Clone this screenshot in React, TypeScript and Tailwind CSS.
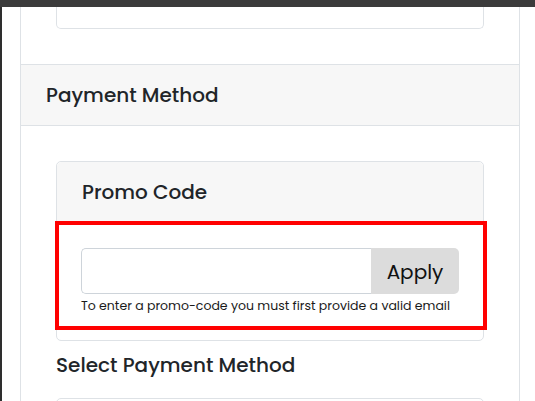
import React from 'react';

const font = { fontFamily: 'Poppins, "Open Sans", "Noto Sans", sans-serif' };

const App: React.FC = () => {
  return (
    <div className="min-h-screen bg-white flex flex-col text-[#212529]" style={font}>
      <div className="h-[7px] bg-[#3b3b3b]" />
      <div className="flex flex-1">
        <div className="w-[2px] bg-[#2e2e2e]" />
        <div className="ml-[18px] w-[500px] border-x border-[#dee2e6] flex flex-col">
          {/* previous section tail */}
          <div className="px-[35px] pb-[35px]">
            <div className="h-[22px] border-x border-b border-[#dee2e6] rounded-b-[5px]" />
          </div>

          {/* Payment Method header */}
          <div className="h-[62px] border-y border-[#dee2e6] bg-[#f7f7f7] flex items-center px-[25px]">
            <h2 className="text-[20px] font-medium leading-none">Payment Method</h2>
          </div>

          <div className="px-[35px] pt-[35px]">
            {/* Promo code card */}
            <div className="border border-[#dee2e6] rounded-[5px]">
              <div className="h-[60px] bg-[#f7f7f7] rounded-t-[5px] flex items-center px-[25px]">
                <h3 className="text-[20px] font-medium leading-none">Promo Code</h3>
              </div>
              <div className="relative px-[24px] pt-[26px] pb-[25px]">
                <div className="flex h-[46px]">
                  <input
                    type="text"
                    className="flex-1 min-w-0 border border-[#ced4da] border-r-0 rounded-l-[5px] px-3 outline-none"
                  />
                  <button className="w-[88px] bg-[#dcdcdc] rounded-r-[5px] text-[20px] text-[#111] leading-none pt-[2px]">
                    Apply
                  </button>
                </div>
                <p className="text-[12.5px] leading-[18px] mt-[3px] text-[#1a1a1a]">
                  To enter a promo-code you must first provide a valid email
                </p>
                <div className="absolute -left-[2px] -right-[4px] -top-[1px] bottom-[10px] border-[4px] border-[#ff0000] pointer-events-none" />
              </div>
            </div>

            <h3 className="text-[20px] font-medium leading-[30px] mt-[9px]">Select Payment Method</h3>

            <div className="mt-[18px] h-[40px] border border-[#dee2e6] rounded-t-[5px]" />
          </div>
        </div>
      </div>
    </div>
  );
};

export default App;
